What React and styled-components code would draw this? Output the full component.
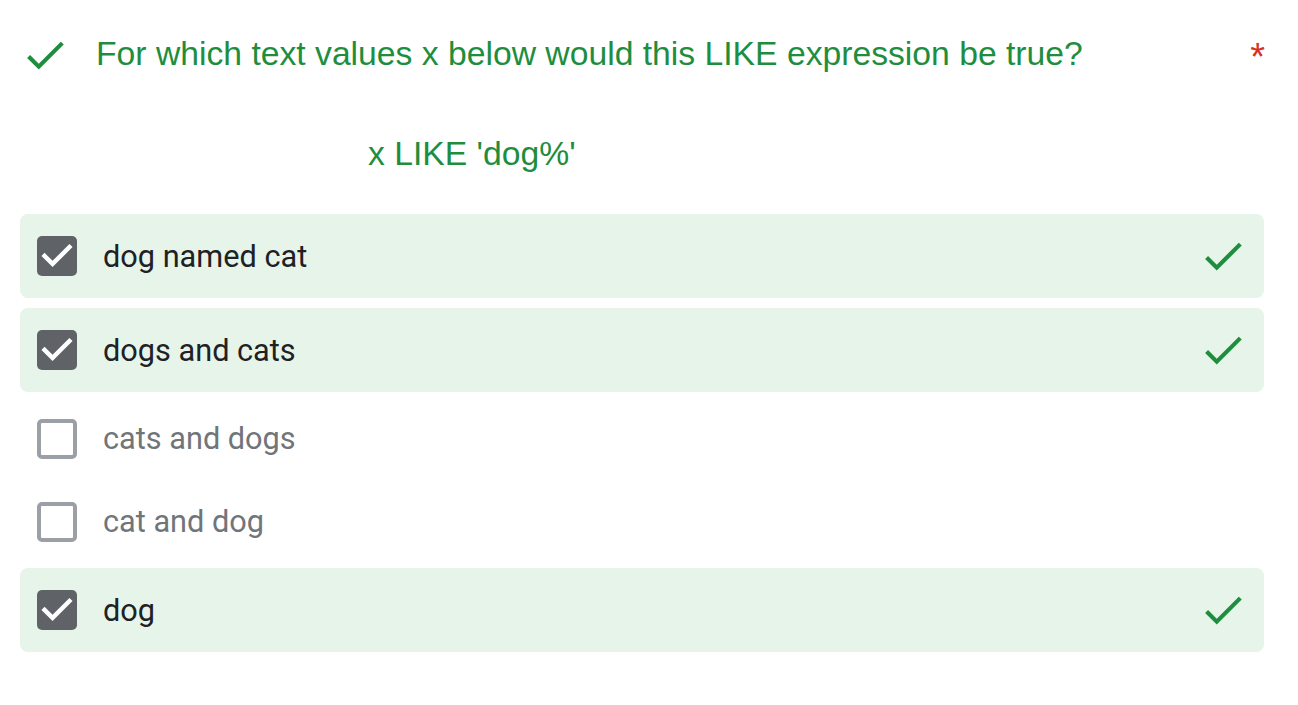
import React from "react";
import styled, { createGlobalStyle } from "styled-components";

const Global = createGlobalStyle`
  html, body { margin: 0; padding: 0; background: #ffffff; }
  body { font-family: "Liberation Sans", Arial, sans-serif; }
`;

const Page = styled.div`
  padding: 0 34px 0 20px;
`;

const Header = styled.div`
  display: flex;
  align-items: flex-start;
  padding-top: 33px;
`;

const HeaderIcon = styled.div`
  width: 50px;
  height: 50px;
  margin-top: -3px;
  flex: none;
`;

const Title = styled.div`
  margin-left: 26px;
  font-family: "Liberation Sans", Arial, sans-serif;
  font-size: 33.7px;
  line-height: 40px;
  color: #1e8e3e;
`;

const Required = styled.span`
  margin-left: auto;
  margin-right: -1px;
  padding-top: 4px;
  font-family: "Liberation Sans", Arial, sans-serif;
  font-size: 38px;
  line-height: 40px;
  color: #d93025;
`;

const Description = styled.div`
  margin-top: 53px;
  padding-left: 348px;
  font-family: "Liberation Sans", Arial, sans-serif;
  font-size: 33.7px;
  line-height: 40px;
  color: #1e8e3e;
`;

const List = styled.div`
  margin-top: 41px;
  display: flex;
  flex-direction: column;
`;

const Row = styled.div`
  display: flex;
  align-items: center;
  height: ${(p) => (p.$correct ? "84px" : "83px")};
  margin: ${(p) => (p.$correct ? "5px 0" : "0")};
  padding: 0 16px 0 17px;
  border-radius: 8px;
  background: ${(p) => (p.$correct ? "#e6f4ea" : "transparent")};
  &:first-child { margin-top: 0; }
`;

const Box = styled.div`
  box-sizing: border-box;
  width: 40px;
  height: 40px;
  flex: none;
  border-radius: 5px;
  display: flex;
  align-items: center;
  justify-content: center;
  background: ${(p) => (p.$checked ? "#5f6368" : "#ffffff")};
  border: ${(p) => (p.$checked ? "none" : "4px solid #9aa0a6")};
`;

const Label = styled.span`
  margin-left: 26px;
  font-family: Roboto, "Noto Sans", sans-serif;
  font-size: 30.7px;
  color: ${(p) => (p.$checked ? "#202124" : "#70757a")};
`;

const RowIcon = styled.div`
  margin-left: auto;
  width: 50px;
  height: 50px;
  flex: none;
`;

const CheckIcon = ({ color = "#1e8e3e" }) => (
  <svg width="50" height="50" viewBox="0 0 24 24">
    <path fill={color} d="M9 16.17L4.83 12l-1.42 1.41L9 19 21 7l-1.41-1.41z" />
  </svg>
);

const BoxTick = () => (
  <svg width="40" height="40" viewBox="3 3 18 18">
    <path fill="#ffffff" d="M10 17l-5-5 1.41-1.41L10 14.17l7.59-7.59L19 8l-9 9z" />
  </svg>
);

const options = [
  { label: "dog named cat", checked: true },
  { label: "dogs and cats", checked: true },
  { label: "cats and dogs", checked: false },
  { label: "cat and dog", checked: false },
  { label: "dog", checked: true },
];

export default function App() {
  return (
    <>
      <Global />
      <Page>
        <Header>
          <HeaderIcon>
            <CheckIcon />
          </HeaderIcon>
          <Title>For which text values x below would this LIKE expression be true?</Title>
          <Required>*</Required>
        </Header>
        <Description>x LIKE 'dog%'</Description>
        <List>
          {options.map((o) => (
            <Row key={o.label} $correct={o.checked}>
              <Box $checked={o.checked}>{o.checked && <BoxTick />}</Box>
              <Label $checked={o.checked}>{o.label}</Label>
              {o.checked && (
                <RowIcon>
                  <CheckIcon />
                </RowIcon>
              )}
            </Row>
          ))}
        </List>
      </Page>
    </>
  );
}
